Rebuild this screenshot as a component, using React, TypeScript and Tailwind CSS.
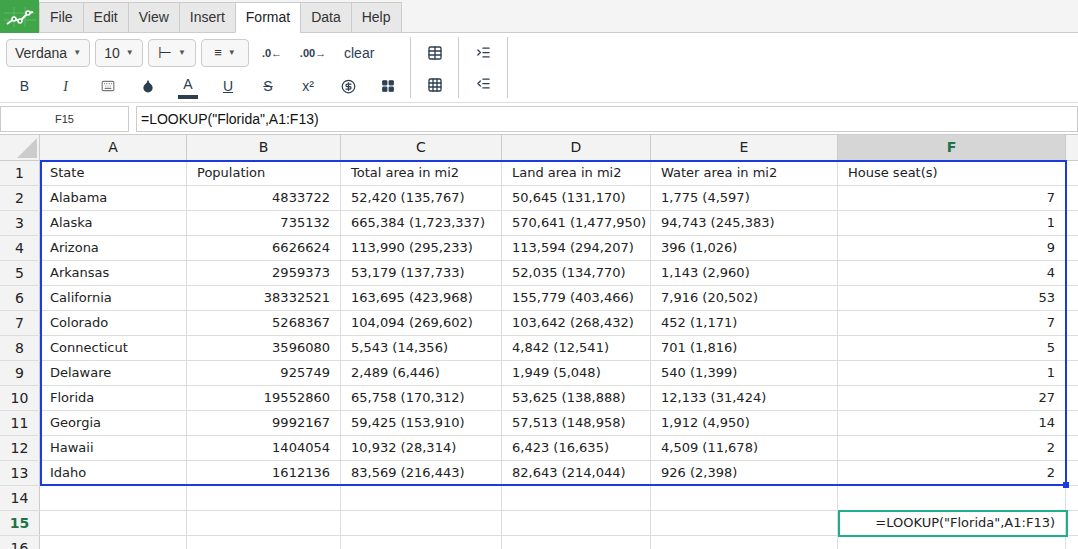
import React from 'react';
import { Droplet, Table, Grid3x3, IndentIncrease, IndentDecrease, CircleDollarSign, LayoutGrid, Keyboard } from 'lucide-react';

const cols = ['A', 'B', 'C', 'D', 'E', 'F'];
const widths = [147, 154, 161, 149, 187, 228];

const data: string[][] = [
  ['State', 'Population', 'Total area in mi2', 'Land area in mi2', 'Water area in mi2', 'House seat(s)'],
  ['Alabama', '4833722', '52,420 (135,767)', '50,645 (131,170)', '1,775 (4,597)', '7'],
  ['Alaska', '735132', '665,384 (1,723,337)', '570,641 (1,477,950)', '94,743 (245,383)', '1'],
  ['Arizona', '6626624', '113,990 (295,233)', '113,594 (294,207)', '396 (1,026)', '9'],
  ['Arkansas', '2959373', '53,179 (137,733)', '52,035 (134,770)', '1,143 (2,960)', '4'],
  ['California', '38332521', '163,695 (423,968)', '155,779 (403,466)', '7,916 (20,502)', '53'],
  ['Colorado', '5268367', '104,094 (269,602)', '103,642 (268,432)', '452 (1,171)', '7'],
  ['Connecticut', '3596080', '5,543 (14,356)', '4,842 (12,541)', '701 (1,816)', '5'],
  ['Delaware', '925749', '2,489 (6,446)', '1,949 (5,048)', '540 (1,399)', '1'],
  ['Florida', '19552860', '65,758 (170,312)', '53,625 (138,888)', '12,133 (31,424)', '27'],
  ['Georgia', '9992167', '59,425 (153,910)', '57,513 (148,958)', '1,912 (4,950)', '14'],
  ['Hawaii', '1404054', '10,932 (28,314)', '6,423 (16,635)', '4,509 (11,678)', '2'],
  ['Idaho', '1612136', '83,569 (216,443)', '82,643 (214,044)', '926 (2,398)', '2'],
];

const tabs = ['File', 'Edit', 'View', 'Insert', 'Format', 'Data', 'Help'];

function Drop({ label, w }: { label: React.ReactNode; w: string }) {
  return (
    <div className={`${w} h-[28px] border border-[#ccc] rounded bg-[#f7f7f7] flex items-center justify-center gap-1.5 text-[14px] text-[#333]`}>
      {label}
      <span className="text-[8px] text-[#555]">▼</span>
    </div>
  );
}

export default function App() {
  const font = { fontFamily: '"Liberation Sans", Arial, sans-serif' };
  const cell = { fontFamily: '"DejaVu Sans", Verdana, sans-serif' };
  return (
    <div className="w-[1078px] h-[549px] overflow-hidden bg-white relative" style={font}>
      {/* menu */}
      <div className="flex h-[33px] bg-[#f4f4f4] border-b border-[#ccc]">
        <div className="w-[39px] h-[33px] bg-[#3fa548] flex items-center justify-center">
          <svg width="32" height="20" viewBox="0 0 32 20">
            <path d="M0 6h32M0 13h32M10 0v20M21 0v20" stroke="#5dbb64" strokeWidth="1" />
            <polyline points="3,17 10,12 16,14 24,6 29,5" fill="none" stroke="#fff" strokeWidth="2" />
            <circle cx="10" cy="12" r="2" fill="#3fa548" stroke="#fff" strokeWidth="1.5" />
            <circle cx="16" cy="14" r="2" fill="#3fa548" stroke="#fff" strokeWidth="1.5" />
            <circle cx="24" cy="6" r="2" fill="#3fa548" stroke="#fff" strokeWidth="1.5" />
          </svg>
        </div>
        <div className="flex pt-[2px] pl-[1px]">
          {tabs.map(t => (
            <div
              key={t}
              className={`px-[10px] h-[31px] flex items-center text-[14px] border border-[#ccc] -ml-px ${t === 'Format' ? 'bg-white border-b-white text-[#222]' : 'bg-[#e8e8e8] text-[#333]'}`}
            >
              {t}
            </div>
          ))}
        </div>
      </div>
      {/* toolbar */}
      <div className="flex h-[70px] border-b border-[#ddd] text-[#2c3e50]">
        <div className="flex flex-col pl-[6px] pt-[6px] gap-[7px] w-[410px]">
          <div className="flex items-center gap-[5px]">
            <Drop label="Verdana" w="w-[84px]" />
            <Drop label="10" w="w-[48px]" />
            <Drop label={<span className="text-[16px]">⊢</span>} w="w-[48px]" />
            <Drop label={<span className="text-[13px]">≡</span>} w="w-[48px]" />
            <span className="w-[36px] text-center text-[11px] font-bold">.0←</span>
            <span className="w-[36px] text-center text-[11px] font-bold">.00→</span>
            <span className="ml-[8px] text-[14px] text-[#2c3e50]">clear</span>
          </div>
          <div className="flex items-center text-[14px] h-[24px]">
            <span className="w-[37px] text-center">B</span>
            <span className="w-[45px] text-center italic" style={{ fontFamily: '"Liberation Serif", serif' }}>I</span>
            <span className="w-[40px] flex justify-center"><Keyboard className="w-[14px] h-[14px] text-[#777]" /></span>
            <span className="w-[40px] flex justify-center"><Droplet className="w-[14px] h-[14px]" fill="#2c3e50" /></span>
            <span className="w-[40px] flex flex-col items-center"><span>A</span><span className="w-[20px] h-[4px] bg-[#2c3e50]" /></span>
            <span className="w-[40px] text-center underline">U</span>
            <span className="w-[40px] text-center line-through">S</span>
            <span className="w-[40px] text-center">x²</span>
            <span className="w-[40px] flex justify-center"><CircleDollarSign className="w-[15px] h-[15px]" /></span>
            <span className="w-[40px] flex justify-center"><LayoutGrid className="w-[14px] h-[14px]" fill="#2c3e50" /></span>
          </div>
        </div>
        <div className="w-px bg-[#ccc] my-[4px]" />
        <div className="w-[47px] flex flex-col items-center pt-[12px] gap-[16px] text-[#2c3e50]">
          <Table className="w-[16px] h-[16px]" />
          <Grid3x3 className="w-[16px] h-[16px]" />
        </div>
        <div className="w-px bg-[#ccc] my-[4px]" />
        <div className="w-[48px] flex flex-col items-center pt-[12px] gap-[16px] text-[#2c3e50]">
          <IndentIncrease className="w-[15px] h-[15px]" />
          <IndentDecrease className="w-[15px] h-[15px]" />
        </div>
        <div className="w-px bg-[#ccc] my-[4px]" />
      </div>
      {/* formula bar */}
      <div className="flex h-[26px] mt-[3px] text-[14px] gap-[7px]">
        <div className="w-[129px] border border-[#ccc] flex items-center justify-center text-[11px] text-[#333]">F15</div>
        <div className="flex-1 border border-[#ccc] flex items-center px-[4px] text-[#111]">=LOOKUP("Florida",A1:F13)</div>
      </div>
      {/* grid */}
      <div className="mt-[2px] relative text-[13px] text-[#222]" style={cell}>
        <div className="flex h-[27px] bg-[#f3f3f3] border-t border-b border-[#ccc]">
          <div className="w-[40px] border-r border-[#ccc] relative overflow-hidden">
            <div className="absolute right-[2px] bottom-[2px] w-0 h-0 border-l-[20px] border-l-transparent border-b-[20px] border-b-[#ccc]" />
          </div>
          {cols.map((c, i) => (
            <div
              key={c}
              style={{ width: widths[i] }}
              className={`border-r border-[#ccc] flex items-center justify-center text-[14px] ${c === 'F' ? 'bg-[#d6d6d6] text-[#217346] font-bold' : ''}`}
            >
              {c}
            </div>
          ))}
          <div className="flex-1" />
        </div>
        {Array.from({ length: 16 }).map((_, r) => {
          const row = data[r];
          return (
            <div key={r} className="flex h-[25px] border-b border-[#ddd]">
              <div className={`w-[40px] bg-[#f3f3f3] border-r border-[#ccc] flex items-center justify-center text-[14px] ${r === 14 ? 'text-[#217346] font-bold bg-[#e6e6e6]' : ''}`}>
                {r + 1}
              </div>
              {cols.map((c, i) => {
                const v = row ? row[i] : r === 14 && i === 5 ? '=LOOKUP("Florida",A1:F13)' : '';
                const right = (r > 0 && row && (i === 1 || i === 5)) || (r === 14 && i === 5);
                return (
                  <div
                    key={c}
                    style={{ width: widths[i] }}
                    className={`border-r border-[#ddd] flex items-center px-[10px] whitespace-nowrap overflow-hidden ${right ? 'justify-end' : ''}`}
                  >
                    {v}
                  </div>
                );
              })}
            </div>
          );
        })}
        {/* selection overlays */}
        <div className="absolute left-[40px] top-[26px] w-[1027px] h-[326px] border-2 border-[#1a3be0] pointer-events-none">
          <div className="absolute -right-[4px] -bottom-[4px] w-[6px] h-[6px] bg-[#1a3be0]" />
        </div>
        <div className="absolute left-[838px] top-[376px] w-[230px] h-[27px] border-2 border-[#1fae8e] pointer-events-none" />
      </div>
    </div>
  );
}
